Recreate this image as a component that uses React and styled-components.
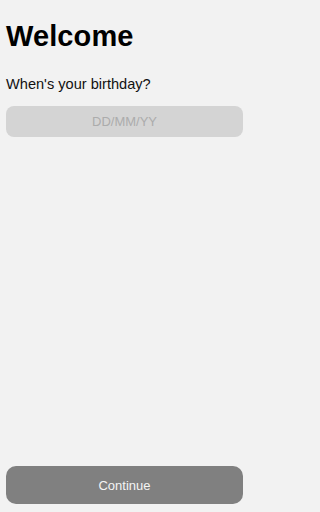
import styled, { createGlobalStyle } from 'styled-components';

const GlobalStyle = createGlobalStyle`
    html, body {
        margin: 0;
        padding: 0;
        height: 100%;
        background-color: #f2f2f2;
    }
    #root {
        height: 100%;
    }
    * {
        box-sizing: border-box;
    }
`

const Screen = styled.main`
    width: 250px;
    min-height: 100vh;
    display: flex;
    flex-direction: column;
    padding: 20px 7px 8px 6px;
    background-color: #f2f2f2;
    font-family: "Liberation Sans", Arial, sans-serif;
`

const Title = styled.h1`
    margin: 0;
    font-size: 29px;
    line-height: 1.15;
    font-weight: 700;
    color: #000;
    letter-spacing: 0.1px;
`

const Question = styled.p`
    margin: 23px 0 0;
    font-size: 14.6px;
    line-height: 1.15;
    color: #111;
`

const DateInput = styled.input`
    margin-top: 13px;
    width: 100%;
    height: 31px;
    border: none;
    border-radius: 8px;
    background-color: #d4d4d4;
    text-align: center;
    font-family: inherit;
    font-size: 13px;
    color: #333;
    outline: none;
    &::placeholder {
        color: #acacac;
    }
`

const ContinueBtn = styled.button`
    margin-top: auto;
    width: 100%;
    height: 38px;
    border: none;
    border-radius: 10px;
    background-color: #808080;
    color: #f4f4f4;
    font-family: inherit;
    font-size: 13px;
`

function App() {
    return (
        <>
            <GlobalStyle />
            <Screen>
                <Title>Welcome</Title>
                <Question>When's your birthday?</Question>
                <DateInput placeholder="DD/MM/YY" />
                <ContinueBtn>Continue</ContinueBtn>
            </Screen>
        </>
    )
}

export default App;
